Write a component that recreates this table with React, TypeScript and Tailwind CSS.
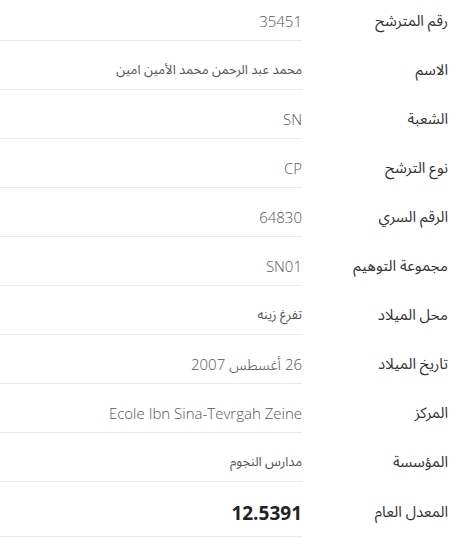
const rows: { label: string; value: string; arabic?: boolean }[] = [
  { label: "رقم المترشح", value: "35451" },
  { label: "الاسم", value: "محمد عبد الرحمن محمد الأمين امين", arabic: true },
  { label: "الشعبة", value: "SN" },
  { label: "نوع الترشح", value: "CP" },
  { label: "الرقم السري", value: "64830" },
  { label: "مجموعة التوهيم", value: "SN01" },
  { label: "محل الميلاد", value: "تفرغ زينه", arabic: true },
  { label: "تاريخ الميلاد", value: "26 أغسطس 2007" },
  { label: "المركز", value: "Ecole Ibn Sina-Tevrgah Zeine" },
  { label: "المؤسسة", value: "مدارس النجوم", arabic: true },
];

const latin = { fontFamily: '"Open Sans", "Noto Sans Arabic", "DejaVu Sans", sans-serif' };
const arabicFont = { fontFamily: '"Noto Sans Arabic", "DejaVu Sans", "Noto Sans", sans-serif' };

export default function App() {
  return (
    <div dir="rtl" className="h-[538px] w-[467px] overflow-hidden bg-white">
      <div className="-mt-[8px] flex flex-col">
        {rows.map((row) => (
          <div key={row.label} className="flex">
            <div
              className="w-[165px] shrink-0 pr-[19px] pt-[19px] text-[15px] leading-5 text-[#333]"
              style={arabicFont}
            >
              {row.label}
            </div>
            <div
              className={`h-[49px] w-[302px] border-b border-[#e9e9e9] pt-[19px] leading-5 text-[#555] ${
                row.arabic ? "text-[13px]" : "text-[15px] font-light"
              }`}
              style={row.arabic ? arabicFont : latin}
            >
              {row.value}
            </div>
          </div>
        ))}
        <div className="flex">
          <div
            className="w-[165px] shrink-0 pr-[19px] pt-[20px] text-[15px] leading-5 text-[#333]"
            style={arabicFont}
          >
            المعدل العام
          </div>
          <div
            className="h-[55px] w-[302px] border-b border-[#e9e9e9] pt-[19px] text-[19px] font-bold leading-6 text-[#222]"
            style={latin}
          >
            12.5391
          </div>
        </div>
      </div>
    </div>
  );
}
